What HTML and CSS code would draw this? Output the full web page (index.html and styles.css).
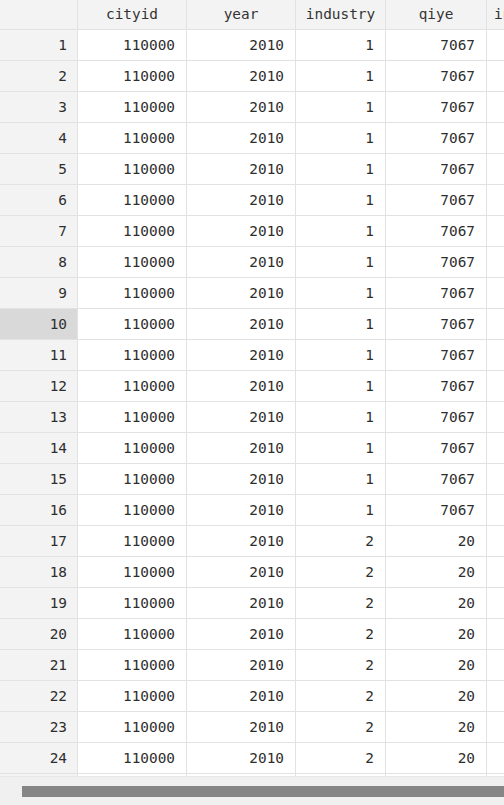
FILE: index.html
```html
<!DOCTYPE html>
<html>
<head>
<meta charset="utf-8">
<link rel="stylesheet" href="styles.css">
</head>
<body>
<div class="viewport">
  <div class="grid" id="grid">
    <div class="row head">
      <div class="cell rh"></div>
      <div class="cell c1">cityid</div>
      <div class="cell c2">year</div>
      <div class="cell c3">industry</div>
      <div class="cell c4">qiye</div>
      <div class="cell c5">industryname</div>
    </div>
  </div>
</div>
<div class="hscroll"><div class="thumb"></div></div>
<script src="app.js"></script>
</body>
</html>
```
FILE: app.js
```js
var g = document.getElementById('grid');
for (var i = 1; i <= 25; i++) {
  var r = document.createElement('div');
  r.className = 'row';
  var ind = i <= 16 ? 1 : 2;
  var q = i <= 16 ? 7067 : 20;
  r.innerHTML =
    '<div class="cell rh' + (i === 10 ? ' sel' : '') + '">' + i + '</div>' +
    '<div class="cell c1">110000</div>' +
    '<div class="cell c2">2010</div>' +
    '<div class="cell c3">' + ind + '</div>' +
    '<div class="cell c4">' + q + '</div>' +
    '<div class="cell c5"></div>';
  g.appendChild(r);
}
```
FILE: styles.css
```css
html, body {
  margin: 0;
  padding: 0;
  background: #ffffff;
}
body {
  width: 504px;
  height: 805px;
  overflow: hidden;
  font-family: "DejaVu Sans Mono", "Liberation Mono", monospace;
  font-size: 14.4px;
  color: #2e2e2e;
}
.viewport {
  height: 776px;
  overflow: hidden;
}
.grid {
  display: flex;
  flex-direction: column;
  width: 700px;
}
.row {
  display: flex;
  height: 31px;
  border-bottom: 1px solid #e2e2e2;
  box-sizing: border-box;
}
.row.head {
  height: 30px;
  background: #f3f3f3;
}
.cell {
  box-sizing: border-box;
  border-right: 1px solid #e2e2e2;
  line-height: 30px;
  text-align: right;
  padding-right: 11px;
  white-space: nowrap;
  overflow: hidden;
  flex: none;
}
.head .cell {
  line-height: 29px;
  text-align: center;
  padding: 0;
  color: #333;
}
.rh {
  width: 78px;
  background: #f3f3f3;
  padding-right: 10px;
}
.rh.sel {
  background: #d9d9d9;
}
.c1 { width: 109px; }
.c2 { width: 109px; }
.c3 { width: 90px; }
.c4 { width: 101px; }
.c5 { width: 124px; }
.head .c5 {
  text-align: left;
  padding-left: 7px;
}
.hscroll {
  height: 29px;
  background: #f0f0f0;
  border-top: 1px solid #e8e8e8;
  box-sizing: border-box;
  padding: 9px 0 0 22px;
}
.thumb {
  height: 11px;
  background: #868686;
}
```
